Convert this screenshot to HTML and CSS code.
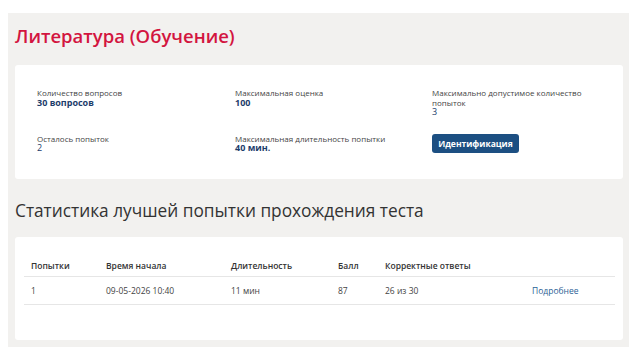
FILE: index.html
```html
<!DOCTYPE html>
<html lang="ru">
<head>
<meta charset="utf-8">
<link rel="stylesheet" href="styles.css">
</head>
<body>
<div class="page">
  <h1 class="title">Литература (Обучение)</h1>
  <div class="card info">
    <div class="grid">
      <div class="item"><div class="label">Количество вопросов</div><div class="value">30 вопросов</div></div>
      <div class="item"><div class="label">Максимальная оценка</div><div class="value">100</div></div>
      <div class="item"><div class="label narrow">Максимально допустимое количество попыток</div><div class="value light">3</div></div>
      <div class="item"><div class="label">Осталось попыток</div><div class="value light">2</div></div>
      <div class="item"><div class="label">Максимальная длительность попытки</div><div class="value">40 мин.</div></div>
      <div class="item"><button class="btn">Идентификация</button></div>
    </div>
  </div>
  <h2 class="subtitle">Статистика лучшей попытки прохождения теста</h2>
  <div class="card stats">
    <table class="table">
      <colgroup>
        <col class="c1"><col class="c2"><col class="c3"><col class="c4"><col class="c5"><col class="c6">
      </colgroup>
      <thead>
        <tr><th>Попытки</th><th>Время начала</th><th>Длительность</th><th>Балл</th><th>Корректные ответы</th><th></th></tr>
      </thead>
      <tbody>
        <tr><td>1</td><td>09-05-2026 10:40</td><td>11 мин</td><td>87</td><td>26 из 30</td><td><a class="link" href="#">Подробнее</a></td></tr>
      </tbody>
    </table>
  </div>
</div>
</body>
</html>
```
FILE: styles.css
```css
html, body {
  margin: 0;
  padding: 0;
  background: #ffffff;
  overflow: hidden;
}
body {
  font-family: "Open Sans", "Noto Sans", sans-serif;
  color: #333;
}
.page {
  margin: 13px 0 0 8px;
  padding: 9px 6px 10px 7px;
  background: #f2f1ef;
  min-height: 332px;
  box-sizing: border-box;
}
.title {
  margin: 0;
  font-size: 18.5px;
  line-height: 28px;
  font-weight: 600;
  color: #d3153f;
}
.card {
  background: #fff;
  border-radius: 3px;
}
.info {
  margin-top: 15px;
  padding: 23px 10px 25px 22px;
}
.grid {
  display: grid;
  grid-template-columns: 198px 197px 1fr;
  row-gap: 16px;
}
.label {
  font-size: 8px;
  line-height: 9.5px;
  color: #444;
}
.label.narrow {
  max-width: 150px;
}
.value {
  font-size: 9px;
  line-height: 10.5px;
  font-weight: 700;
  color: #1d3d6b;
}
.value.light {
  font-weight: 400;
}
.btn {
  display: block;
  width: 87px;
  height: 19px;
  border: 0;
  border-radius: 3px;
  background: #1c4f82;
  color: #fff;
  font-family: inherit;
  font-size: 8.5px;
  font-weight: 700;
  padding: 0;
}
.subtitle {
  margin: 20px 0 0 0;
  font-size: 17.3px;
  line-height: 24px;
  font-weight: 400;
  color: #333;
}
.stats {
  margin-top: 14px;
  padding: 18px 8px 35px 9px;
}
.table {
  width: 100%;
  border-collapse: collapse;
  font-size: 8.5px;
}
.c1 { width: 75px; }
.c2 { width: 125px; }
.c3 { width: 107px; }
.c4 { width: 47px; }
.c5 { width: 147px; }
.table th {
  text-align: left;
  font-weight: 600;
  color: #333;
  height: 21px;
  padding: 0 0 0 7px;
  border-bottom: 1px solid #e6e6e6;
}
.table td {
  height: 27px;
  padding: 0 0 0 7px;
  color: #444;
  border-bottom: 1px solid #e6e6e6;
}
.link {
  color: #2b5f96;
  text-decoration: none;
}
```
